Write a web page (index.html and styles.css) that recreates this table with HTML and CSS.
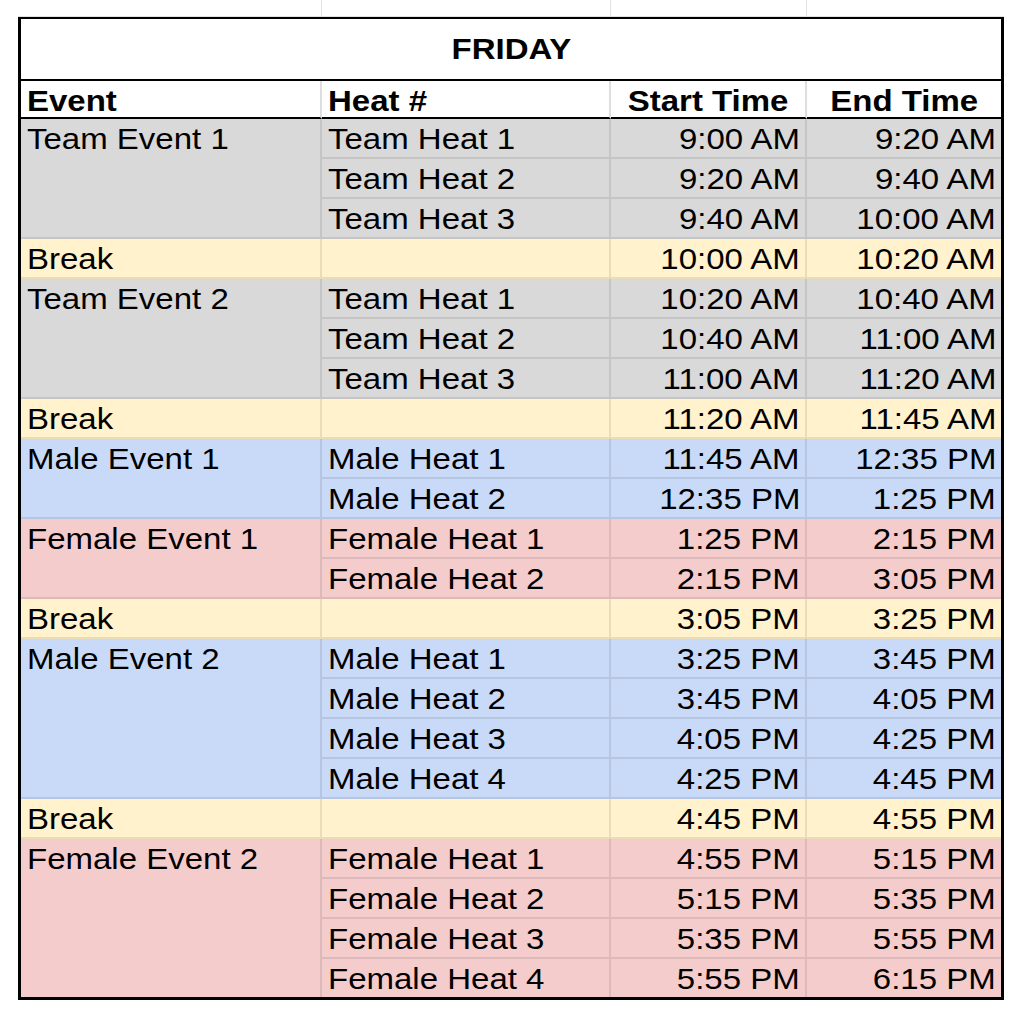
FILE: index.html
```html
<!DOCTYPE html>
<html lang="en">
<head>
<meta charset="utf-8">
<title>Friday Schedule</title>
<link rel="stylesheet" href="styles.css">
</head>
<body>
<div class="sheet">
  <div class="stubs">
    <div class="stub s1"></div>
    <div class="stub s2"></div>
    <div class="stub s3"></div>
    <div class="stub s4"></div>
  </div>
  <table class="schedule">
    <colgroup>
      <col class="c-event">
      <col class="c-heat">
      <col class="c-start">
      <col class="c-end">
    </colgroup>
    <thead>
      <tr><th class="title" colspan="4"><span class="t tc">FRIDAY</span></th></tr>
      <tr class="head">
        <th class="l"><span class="t tl">Event</span></th>
        <th class="l"><span class="t tl">Heat #</span></th>
        <th class="c"><span class="t tc">Start Time</span></th>
        <th class="c last"><span class="t tc">End Time</span></th>
      </tr>
    </thead>
    <tbody>
      <tr class="gray">
        <td class="ev" rowspan="3"><span class="t tl">Team Event 1</span></td>
        <td><span class="t tl">Team Heat 1</span></td>
        <td class="r"><span class="t tr">9:00 AM</span></td>
        <td class="r last"><span class="t tr">9:20 AM</span></td>
      </tr>
      <tr class="gray">
        <td><span class="t tl">Team Heat 2</span></td>
        <td class="r"><span class="t tr">9:20 AM</span></td>
        <td class="r last"><span class="t tr">9:40 AM</span></td>
      </tr>
      <tr class="gray">
        <td><span class="t tl">Team Heat 3</span></td>
        <td class="r"><span class="t tr">9:40 AM</span></td>
        <td class="r last"><span class="t tr">10:00 AM</span></td>
      </tr>
      <tr class="brk">
        <td><span class="t tl">Break</span></td>
        <td></td>
        <td class="r"><span class="t tr">10:00 AM</span></td>
        <td class="r last"><span class="t tr">10:20 AM</span></td>
      </tr>
      <tr class="gray">
        <td class="ev" rowspan="3"><span class="t tl">Team Event 2</span></td>
        <td><span class="t tl">Team Heat 1</span></td>
        <td class="r"><span class="t tr">10:20 AM</span></td>
        <td class="r last"><span class="t tr">10:40 AM</span></td>
      </tr>
      <tr class="gray">
        <td><span class="t tl">Team Heat 2</span></td>
        <td class="r"><span class="t tr">10:40 AM</span></td>
        <td class="r last"><span class="t tr">11:00 AM</span></td>
      </tr>
      <tr class="gray">
        <td><span class="t tl">Team Heat 3</span></td>
        <td class="r"><span class="t tr">11:00 AM</span></td>
        <td class="r last"><span class="t tr">11:20 AM</span></td>
      </tr>
      <tr class="brk">
        <td><span class="t tl">Break</span></td>
        <td></td>
        <td class="r"><span class="t tr">11:20 AM</span></td>
        <td class="r last"><span class="t tr">11:45 AM</span></td>
      </tr>
      <tr class="blue">
        <td class="ev" rowspan="2"><span class="t tl">Male Event 1</span></td>
        <td><span class="t tl">Male Heat 1</span></td>
        <td class="r"><span class="t tr">11:45 AM</span></td>
        <td class="r last"><span class="t tr">12:35 PM</span></td>
      </tr>
      <tr class="blue">
        <td><span class="t tl">Male Heat 2</span></td>
        <td class="r"><span class="t tr">12:35 PM</span></td>
        <td class="r last"><span class="t tr">1:25 PM</span></td>
      </tr>
      <tr class="pink">
        <td class="ev" rowspan="2"><span class="t tl">Female Event 1</span></td>
        <td><span class="t tl">Female Heat 1</span></td>
        <td class="r"><span class="t tr">1:25 PM</span></td>
        <td class="r last"><span class="t tr">2:15 PM</span></td>
      </tr>
      <tr class="pink">
        <td><span class="t tl">Female Heat 2</span></td>
        <td class="r"><span class="t tr">2:15 PM</span></td>
        <td class="r last"><span class="t tr">3:05 PM</span></td>
      </tr>
      <tr class="brk">
        <td><span class="t tl">Break</span></td>
        <td></td>
        <td class="r"><span class="t tr">3:05 PM</span></td>
        <td class="r last"><span class="t tr">3:25 PM</span></td>
      </tr>
      <tr class="blue">
        <td class="ev" rowspan="4"><span class="t tl">Male Event 2</span></td>
        <td><span class="t tl">Male Heat 1</span></td>
        <td class="r"><span class="t tr">3:25 PM</span></td>
        <td class="r last"><span class="t tr">3:45 PM</span></td>
      </tr>
      <tr class="blue">
        <td><span class="t tl">Male Heat 2</span></td>
        <td class="r"><span class="t tr">3:45 PM</span></td>
        <td class="r last"><span class="t tr">4:05 PM</span></td>
      </tr>
      <tr class="blue">
        <td><span class="t tl">Male Heat 3</span></td>
        <td class="r"><span class="t tr">4:05 PM</span></td>
        <td class="r last"><span class="t tr">4:25 PM</span></td>
      </tr>
      <tr class="blue">
        <td><span class="t tl">Male Heat 4</span></td>
        <td class="r"><span class="t tr">4:25 PM</span></td>
        <td class="r last"><span class="t tr">4:45 PM</span></td>
      </tr>
      <tr class="brk">
        <td><span class="t tl">Break</span></td>
        <td></td>
        <td class="r"><span class="t tr">4:45 PM</span></td>
        <td class="r last"><span class="t tr">4:55 PM</span></td>
      </tr>
      <tr class="pink">
        <td class="ev bottom" rowspan="4"><span class="t tl">Female Event 2</span></td>
        <td><span class="t tl">Female Heat 1</span></td>
        <td class="r"><span class="t tr">4:55 PM</span></td>
        <td class="r last"><span class="t tr">5:15 PM</span></td>
      </tr>
      <tr class="pink">
        <td><span class="t tl">Female Heat 2</span></td>
        <td class="r"><span class="t tr">5:15 PM</span></td>
        <td class="r last"><span class="t tr">5:35 PM</span></td>
      </tr>
      <tr class="pink">
        <td><span class="t tl">Female Heat 3</span></td>
        <td class="r"><span class="t tr">5:35 PM</span></td>
        <td class="r last"><span class="t tr">5:55 PM</span></td>
      </tr>
      <tr class="pink final">
        <td><span class="t tl">Female Heat 4</span></td>
        <td class="r"><span class="t tr">5:55 PM</span></td>
        <td class="r last"><span class="t tr">6:15 PM</span></td>
      </tr>
    </tbody>
  </table>
</div>
</body>
</html>
```

FILE: styles.css
```css
html, body {
  margin: 0;
  padding: 0;
  background: #ffffff;
}

body {
  font-family: "Liberation Sans", Arial, sans-serif;
  color: #000000;
}

.sheet {
  padding-left: 18px;
  width: 986px;
}

/* faint spreadsheet gridline stubs above the table */
.stubs {
  display: flex;
  height: 17px;
  box-sizing: border-box;
  border-bottom: 1px solid #e2e2e2;
}
.stub {
  box-sizing: border-box;
  height: 100%;
}
.s1 { width: 304px; border-right: 1px solid #e2e2e2; }
.s2 { width: 289px; border-right: 1px solid #e2e2e2; }
.s3 { width: 196px; border-right: 1px solid #e2e2e2; }
.s4 { flex: 1; }

.schedule {
  table-layout: fixed;
  border-collapse: separate;
  border-spacing: 0;
  width: 986px;
  border-style: solid;
  border-color: #000000;
  border-width: 2px 3px 3px 3px;
  font-size: 30px;
}

.c-event { width: 301px; }
.c-heat  { width: 289px; }
.c-start { width: 196px; }
.c-end   { width: 194px; }

.t {
  display: inline-block;
  white-space: nowrap;
  transform: scaleX(1.1);
}
.tl { transform-origin: left center; }
.tr { transform-origin: right center; }
.tc { transform-origin: center center; }

th {
  font-weight: bold;
  padding: 0;
  background: #ffffff;
}

.title {
  text-align: center;
  line-height: 60px;
  border-bottom: 2px solid #000000;
}

.head th {
  padding: 4px 6px 0 6px;
  line-height: 32px;
  border-bottom: 2px solid #000000;
  border-right: 2px solid #dedede;
}
.head th.l { text-align: left; }
.head th.c { text-align: center; }
.head th.last { border-right: none; }

td {
  padding: 1px 6px 0 6px;
  line-height: 37px;
  border-right: 2px solid rgba(0, 0, 0, 0.09);
  border-bottom: 2px solid rgba(0, 0, 0, 0.09);
  text-align: left;
  vertical-align: top;
  white-space: nowrap;
}
td.r {
  text-align: right;
  padding-right: 5px;
}
td.last { border-right: none; }
td.bottom,
.final td { border-bottom: none; }

.gray td { background-color: #d9d9d9; }
.brk td  { background-color: #fff2cc; }
.blue td { background-color: #c9daf8; }
.pink td { background-color: #f4cccc; }
```
